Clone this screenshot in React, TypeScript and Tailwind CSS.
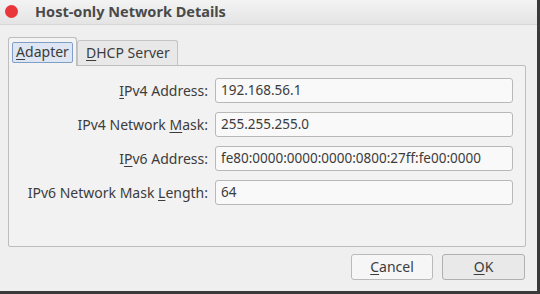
import React from "react";

const U = ({ children }: { children: React.ReactNode }) => (
  <span className="underline underline-offset-2 decoration-1">{children}</span>
);

const rows: { label: React.ReactNode; value: string }[] = [
  { label: <><U>I</U>Pv4 Address:</>, value: "192.168.56.1" },
  { label: <>IPv4 Network <U>M</U>ask:</>, value: "255.255.255.0" },
  { label: <>I<U>P</U>v6 Address:</>, value: "fe80:0000:0000:0000:0800:27ff:fe00:0000" },
  { label: <>IPv6 Network Mask <U>L</U>ength:</>, value: "64" },
];

export default function App() {
  return (
    <div
      className="w-[540px] h-[294px] bg-[#3a3a3a] overflow-hidden text-[#3c3c3c]"
      style={{ fontFamily: '"Noto Sans", "Open Sans", sans-serif' }}
    >
      <div className="w-[537px] h-[291px] bg-[#efefef] flex flex-col">
        {/* Title bar */}
        <div className="h-[25px] flex items-center bg-gradient-to-b from-[#f3f3f3] to-[#e4e4e4] border-b border-[#d6d6d6]">
          <div className="w-[13px] h-[13px] rounded-full bg-[#e8363a] ml-[5px] -mt-[2px]" />
          <div className="ml-[17px] text-[14.5px] font-bold text-[#4a4a4a] leading-none -mt-[2px]">Host-only Network Details</div>
        </div>
        {/* Tabs */}
        <div className="flex items-end pl-[8px] mt-[11px] h-[29px]">
          <div className="h-[29px] w-[69px] border border-b-0 border-[#bdbdbd] rounded-t-[3px] bg-[#f3f3f3] flex items-center justify-center relative z-10 -mb-px">
            <div className="h-[21px] px-[3px] border border-[#7f9fc8] rounded-[2px] bg-[#dde6f2] flex items-center text-[14px] leading-none">
              <U>A</U>dapter
            </div>
          </div>
          <div className="h-[25px] w-[101px] border border-b-0 border-[#c4c4c4] rounded-t-[3px] bg-[#e8e8e8] flex items-center pl-[8px] text-[14px] leading-none">
            <U>D</U>HCP Server
          </div>
        </div>
        {/* Panel */}
        <div className="ml-[8px] w-[518px] h-[182px] border border-[#bdbdbd] rounded-[2px] bg-[#f2f2f2] pt-[12px] flex flex-col gap-[9px]">
          {rows.map((r, i) => (
            <div key={i} className="flex items-center h-[25px]">
              <div className="w-[200px] text-right text-[14px] leading-none pr-[1px]">{r.label}</div>
              <div className="ml-[6px] w-[298px] h-[25px] border border-[#b8b8b8] rounded-[3px] bg-[#f9f9f9] flex items-center pl-[5px] text-[13.5px] leading-none">
                {r.value}
              </div>
            </div>
          ))}
        </div>
        {/* Buttons */}
        <div className="flex justify-end gap-[9px] mt-[7px] pr-[12px]">
          <div className="w-[82px] h-[26px] border border-[#bababa] rounded-[3px] bg-[#f6f6f6] flex items-center justify-center text-[14px] leading-none">
            <U>C</U>ancel
          </div>
          <div className="w-[83px] h-[26px] border border-[#b0b0b0] rounded-[3px] bg-[#e9e9e9] flex items-center justify-center text-[14px] leading-none">
            <U>O</U>K
          </div>
        </div>
      </div>
    </div>
  );
}
